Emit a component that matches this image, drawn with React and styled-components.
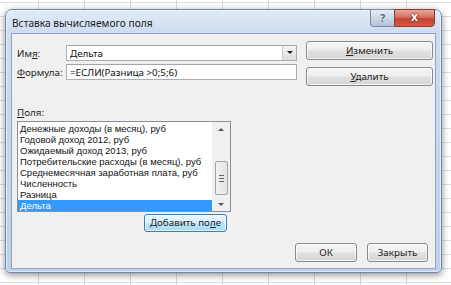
import styled, { createGlobalStyle } from 'styled-components'

const fields = [
  'Денежные доходы (в месяц), руб',
  'Годовой доход 2012, руб',
  'Ожидаемый доход 2013, руб',
  'Потребительские расходы (в месяц), руб',
  'Среднемесячная заработная плата, руб',
  'Численность',
  'Разница',
  'Дельта',
]

function App() {
  return (
    <>
      <GlobalStyle />
      <Page>
        <Window>
          <TitleBar>
            <Title>Вставка вычисляемого поля</Title>
            <Caption>
              <HelpButton>?</HelpButton>
              <CloseButton>x</CloseButton>
            </Caption>
          </TitleBar>

          <Client>
            <Top>
              <Form>
                <Row>
                  <Label>Им<u>я</u>:</Label>
                  <Combo>
                    <span>Дельта</span>
                    <DropButton />
                  </Combo>
                </Row>
                <Row>
                  <Label><u>Ф</u>ормула:</Label>
                  <TextBox>=ЕСЛИ(Разница &gt;0;5;6)</TextBox>
                </Row>
              </Form>
              <SideButtons>
                <Button $w={127}><u>И</u>зменить</Button>
                <Button $w={127}><u>У</u>далить</Button>
              </SideButtons>
            </Top>

            <Fields>
              <Label><u>П</u>оля:</Label>
              <List>
                <Items>
                  {fields.map((f, i) => (
                    <Item key={f} $selected={i === fields.length - 1}>{f}</Item>
                  ))}
                </Items>
                <ScrollBar>
                  <Arrow $up />
                  <Track>
                    <Thumb><Grip /><Grip /><Grip /></Thumb>
                  </Track>
                  <Arrow />
                </ScrollBar>
              </List>
              <AddButton $w={83} $h={18}>Добавить по<u>л</u>е</AddButton>
            </Fields>

            <Footer>
              <Button $w={62}>ОК</Button>
              <Button $w={61}>Закрыть</Button>
            </Footer>
          </Client>
        </Window>
      </Page>
    </>
  )
}

export default App

/////  Style  /////

const GlobalStyle = createGlobalStyle`
  html, body {
    margin: 0;
    padding: 0;
  }
  body {
    width: 451px;
    height: 285px;
    overflow: hidden;
    font-family: "Noto Sans", "Open Sans", sans-serif;
    font-size: 9.8px;
    color: #1e1e1e;
    background-color: #ffffff;
    background-image:
      linear-gradient(to right, #d9d9d9 1px, transparent 1px),
      linear-gradient(to bottom, #dedede 1px, transparent 1px);
    background-size: 46px 14px;
    background-position: 38px 2px;
  }
`

const Page = styled.div`
  padding: 9px 0 0 5px;
`

const Window = styled.div`
  box-sizing: border-box;
  width: 437px;
  height: 264px;
  display: flex;
  flex-direction: column;
  padding: 0 5px 3px;
  border: 1px solid #7188a6;
  border-radius: 7px 7px 5px 5px;
  background: linear-gradient(to bottom, #e2ecf8 0px, #cddcf0 22px, #c3d6ee 60%, #bcd1ec 100%);
  box-shadow: 0 2px 7px rgba(0, 0, 0, 0.45), inset 0 0 0 1px rgba(255, 255, 255, 0.55);
`

const TitleBar = styled.div`
  height: 23px;
  display: flex;
  justify-content: space-between;
`

const Title = styled.div`
  padding: 6px 0 0 1px;
  font-size: 10.2px;
  color: #1b1b1b;
`

const Caption = styled.div`
  display: flex;
  margin: -1px 1px 0 0;
  height: 18px;
`

const HelpButton = styled.div`
  box-sizing: border-box;
  width: 24px;
  height: 18px;
  border: 1px solid #7a8ca3;
  border-right: none;
  border-radius: 0 0 0 4px;
  background: linear-gradient(to bottom, #e6edf5 0%, #ccd8e6 50%, #b3c4d8 100%);
  color: #50637c;
  font-weight: bold;
  font-size: 11px;
  text-align: center;
  line-height: 16px;
  text-shadow: 0 0 2px #fff;
`

const CloseButton = styled.div`
  box-sizing: border-box;
  width: 41px;
  height: 18px;
  border: 1px solid #8e3b31;
  border-radius: 0 0 4px 0;
  background: linear-gradient(to bottom, #e8a89b 0%, #d4705f 45%, #c4412e 55%, #d35c46 100%);
  color: #ffffff;
  font-weight: bold;
  font-size: 12px;
  text-align: center;
  line-height: 14px;
  text-shadow: 0 0 2px #5a1a12, 0 0 1px #5a1a12;
`

const Client = styled.div`
  flex: 1;
  display: flex;
  flex-direction: column;
  padding: 7px 2px 6px 5px;
  border: 1px solid #8ea4c1;
  background: #f0f0f0;
`

const Top = styled.div`
  display: flex;
  gap: 9px;
`

const Form = styled.div`
  width: 280px;
  margin-top: 4px;
  display: flex;
  flex-direction: column;
  gap: 3px;
`

const Row = styled.div`
  display: grid;
  grid-template-columns: 49px 231px;
  align-items: center;
`

const Label = styled.div`
  line-height: 13px;
  color: #1e1e1e;
  white-space: nowrap;
`

const Field = styled.div`
  box-sizing: border-box;
  height: 16px;
  display: flex;
  align-items: center;
  justify-content: space-between;
  padding-left: 3px;
  border: 1px solid #abadb3;
  border-top-color: #a3a6ad;
  background: #ffffff;
  color: #111;
  white-space: nowrap;
`

const Combo = styled(Field)`
  padding-right: 0;
`

const TextBox = styled(Field)``

const DropButton = styled.div`
  box-sizing: border-box;
  width: 14px;
  height: 14px;
  border-left: 1px solid #c9c9c9;
  background: linear-gradient(to bottom, #f4f4f4, #dcdcdc);
  position: relative;

  &::after {
    content: '';
    position: absolute;
    left: 4px;
    top: 5px;
    border-left: 3px solid transparent;
    border-right: 3px solid transparent;
    border-top: 3px solid #222;
  }
`

const SideButtons = styled.div`
  display: flex;
  flex-direction: column;
  gap: 7px;
`

const Button = styled.button`
  box-sizing: border-box;
  width: ${p => p.$w}px;
  height: ${p => p.$h || 19}px;
  padding: 0;
  border: 1px solid #8a8a8a;
  border-radius: 3px;
  background: linear-gradient(to bottom, #f6f6f6 0%, #ededed 48%, #e0e0e0 52%, #d6d6d6 100%);
  box-shadow: inset 0 0 0 1px rgba(255, 255, 255, 0.7);
  font-family: inherit;
  font-size: 9.8px;
  color: #1e1e1e;
  line-height: 1;
  white-space: nowrap;
`

const AddButton = styled(Button)`
  align-self: flex-end;
  margin: 0 4px 0 0;
  border-color: #3c7fb1;
  background: linear-gradient(to bottom, #eaf6fd 0%, #d9f0fc 48%, #bee6fd 52%, #a7d9f5 100%);
`

const Fields = styled.div`
  width: 214px;
  margin-top: 20px;
  display: flex;
  flex-direction: column;
  gap: 2px;
`

const List = styled.div`
  box-sizing: border-box;
  height: 91px;
  display: flex;
  border: 1px solid #8a8f98;
  background: #ffffff;
`

const Items = styled.div`
  flex: 1;
  min-width: 0;
  padding-top: 1px;
  font-family: "Liberation Sans", Arial, sans-serif;
  font-size: 9.5px;
`

const Item = styled.div`
  height: 11px;
  line-height: 11px;
  padding-left: 2px;
  white-space: nowrap;
  color: ${p => (p.$selected ? '#ffffff' : '#111')};
  background: ${p => (p.$selected ? '#3399ff' : 'transparent')};
`

const ScrollBar = styled.div`
  width: 17px;
  flex: none;
  display: flex;
  flex-direction: column;
  background: #f0f0f0;
  border-left: 1px solid #f4f4f4;
`

const Arrow = styled.div`
  height: 14px;
  position: relative;

  &::after {
    content: '';
    position: absolute;
    left: 5px;
    top: 6px;
    border-left: 3px solid transparent;
    border-right: 3px solid transparent;
    ${p => (p.$up ? 'border-bottom: 3px solid #555;' : 'border-top: 3px solid #555;')}
  }
`

const Track = styled.div`
  flex: 1;
  display: flex;
  flex-direction: column;
  justify-content: flex-end;
  padding: 0 2px 2px;
`

const Thumb = styled.div`
  box-sizing: border-box;
  height: 34px;
  display: flex;
  flex-direction: column;
  align-items: center;
  justify-content: center;
  gap: 2px;
  border: 1px solid #a3a3a3;
  border-radius: 2px;
  background: linear-gradient(to right, #f2f2f2, #e4e4e4);
`

const Grip = styled.div`
  width: 5px;
  height: 1px;
  background: #666;
`

const Footer = styled.div`
  margin: 11px 5px 0 0;
  display: flex;
  justify-content: flex-end;
  gap: 10px;
`
